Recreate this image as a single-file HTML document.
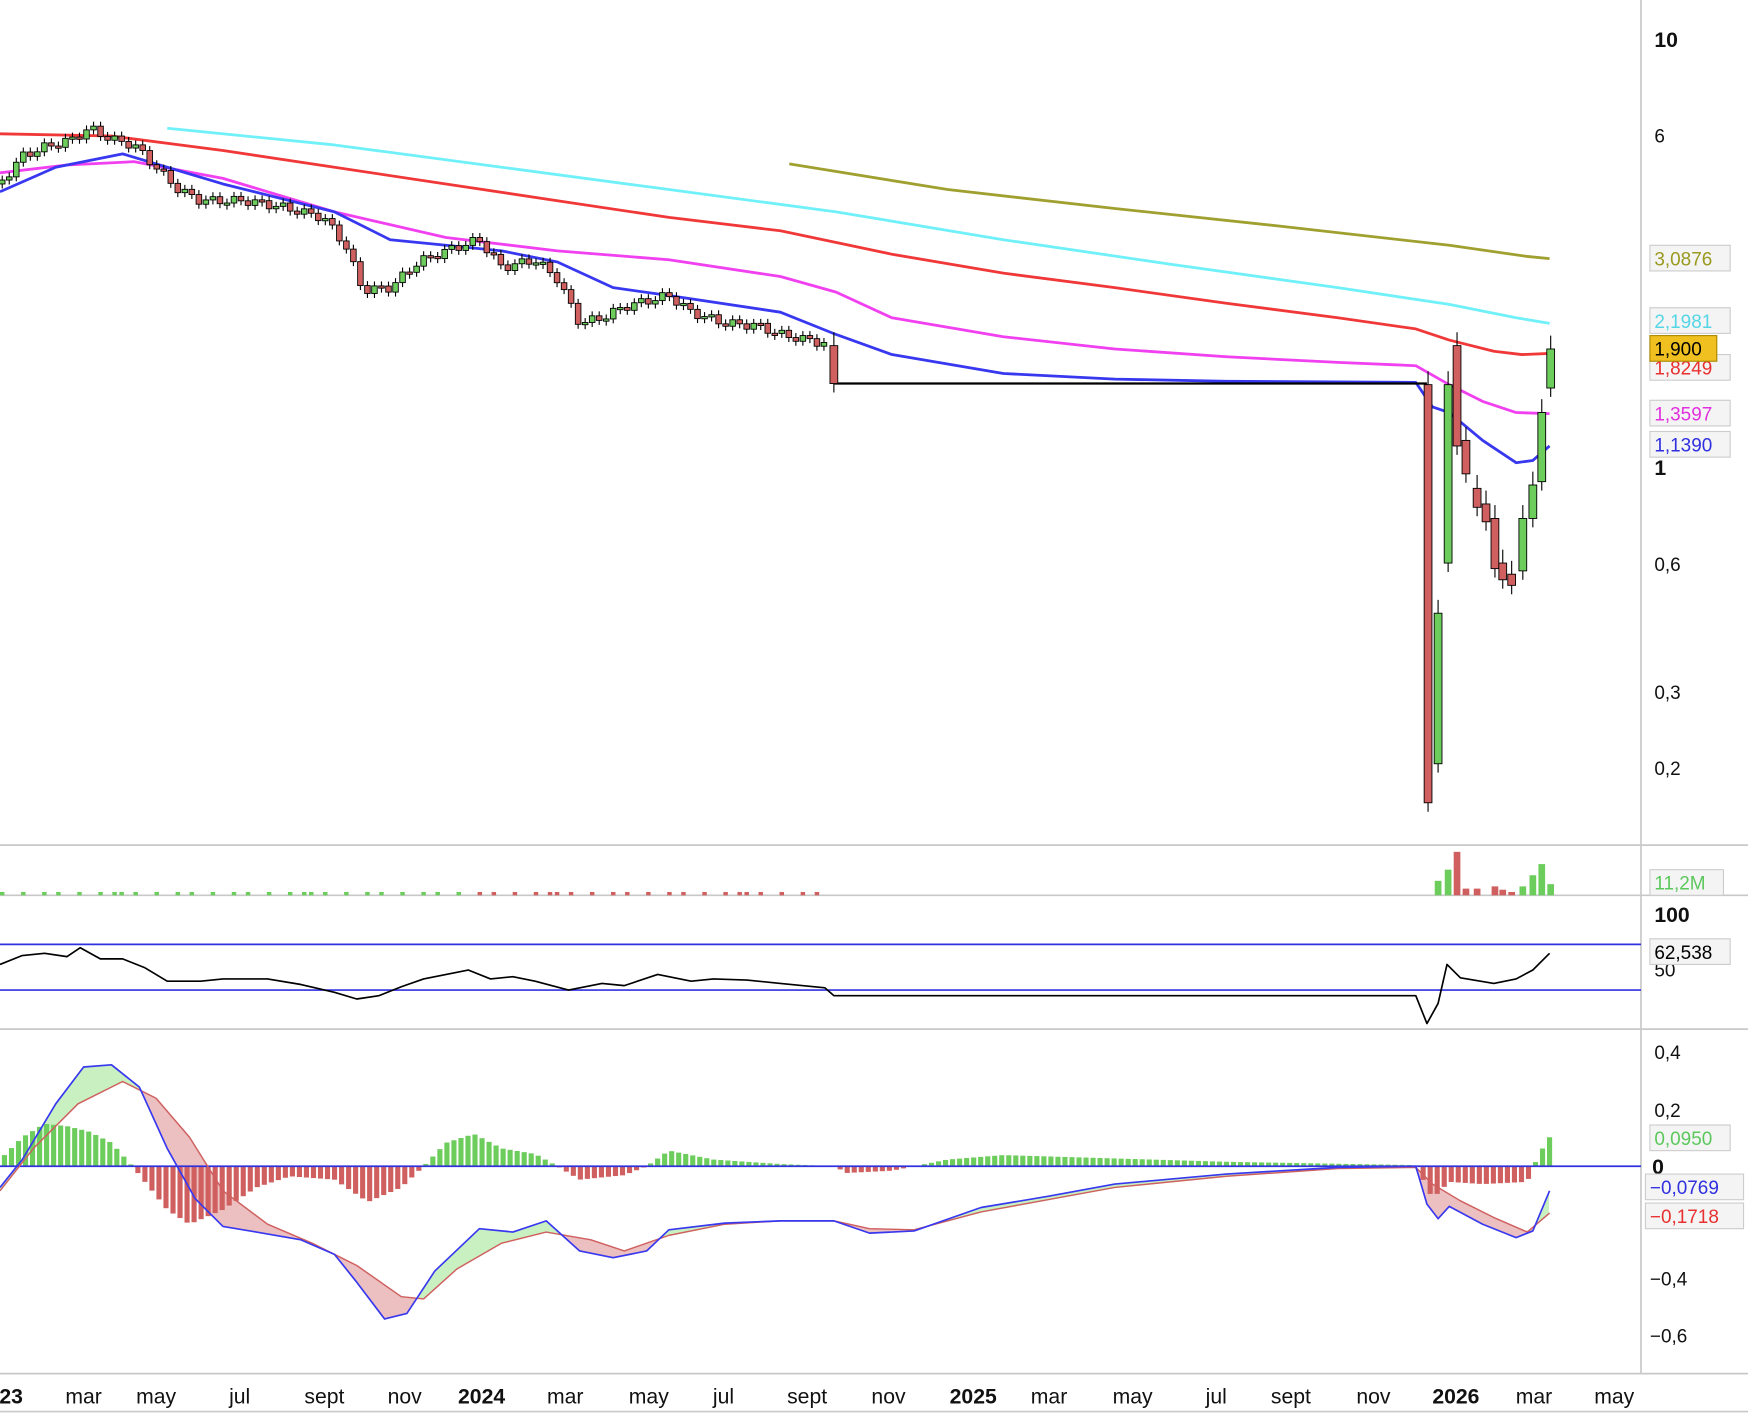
<!DOCTYPE html>
<html><head><meta charset="utf-8"><style>
html,body{margin:0;padding:0;background:#fff;width:1748px;height:1416px;overflow:hidden}
svg{display:block;font-family:"Liberation Sans",sans-serif}
</style></head><body>
<svg id="s" width="1748" height="1416" viewBox="0 0 1568 1270" preserveAspectRatio="none">
<rect width="1568" height="1270" fill="#fff"/>
<g stroke="#c8c8c8" stroke-width="1.5">
<line x1="1472" y1="0" x2="1472" y2="1232"/>
<line x1="0" y1="758" x2="1568" y2="758"/>
<line x1="0" y1="803" x2="1568" y2="803"/>
<line x1="0" y1="923" x2="1568" y2="923"/>
<line x1="0" y1="1232" x2="1568" y2="1232"/>
<line x1="0" y1="1266" x2="1568" y2="1266"/>
</g>
<g id="g"></g>
<g font-size="19" font-weight="bold" fill="#111">
<text x="1484" y="42">10</text><text x="1484" y="426">1</text><text x="1484" y="827">100</text><text x="1482" y="1053">0</text>
</g>
<g font-size="17" fill="#111">
<text x="1484" y="128">6</text><text x="1484" y="512">0,6</text><text x="1484" y="627">0,3</text><text x="1484" y="695">0,2</text>
<text x="1484" y="950">0,4</text><text x="1484" y="1002">0,2</text><text x="1480" y="1153">−0,4</text><text x="1480" y="1204">−0,6</text>
<text x="1484" y="876">50</text>
</g>
<g font-size="17">
<rect x="1480" y="220" width="72" height="23" fill="#f4f4f4" stroke="#ccc"/><text x="1484" y="238" fill="#9a9a20">3,0876</text>
<rect x="1480" y="276" width="72" height="23" fill="#f4f4f4" stroke="#ccc"/><text x="1484" y="294" fill="#55d6e6">2,1981</text>
<rect x="1480" y="318" width="72" height="23" fill="#f4f4f4" stroke="#ccc"/><text x="1484" y="336" fill="#e83030">1,8249</text>
<rect x="1480" y="301" width="60" height="23" fill="#f0c020" stroke="#aa8800"/><text x="1484" y="319" fill="#000">1,900</text>
<rect x="1480" y="359" width="72" height="23" fill="#f4f4f4" stroke="#ccc"/><text x="1484" y="377" fill="#e030e0">1,3597</text>
<rect x="1480" y="387" width="72" height="23" fill="#f4f4f4" stroke="#ccc"/><text x="1484" y="405" fill="#3030e0">1,1390</text>
<rect x="1480" y="780" width="66" height="23" fill="#f4f4f4" stroke="#ccc"/><text x="1484" y="798" fill="#5cc85c">11,2M</text>
<rect x="1480" y="842" width="72" height="23" fill="#f4f4f4" stroke="#ccc"/><text x="1484" y="860" fill="#000">62,538</text>
<rect x="1480" y="1009" width="72" height="23" fill="#f4f4f4" stroke="#ccc"/><text x="1484" y="1027" fill="#5cc85c">0,0950</text>
<rect x="1476" y="1053" width="88" height="23" fill="#f4f4f4" stroke="#ccc"/><text x="1480" y="1071" fill="#3030e0">−0,0769</text>
<rect x="1476" y="1079" width="88" height="23" fill="#f4f4f4" stroke="#ccc"/><text x="1480" y="1097" fill="#e83030">−0,1718</text>
</g>
<g font-size="19" fill="#111" text-anchor="middle">
<text x="10" y="1259" font-weight="bold">23</text><text x="75" y="1259">mar</text><text x="140" y="1259">may</text><text x="215" y="1259">jul</text><text x="291" y="1259">sept</text><text x="363" y="1259">nov</text><text x="432" y="1259" font-weight="bold">2024</text><text x="507" y="1259">mar</text><text x="582" y="1259">may</text><text x="649" y="1259">jul</text><text x="724" y="1259">sept</text><text x="797" y="1259">nov</text><text x="873" y="1259" font-weight="bold">2025</text><text x="941" y="1259">mar</text><text x="1016" y="1259">may</text><text x="1091" y="1259">jul</text><text x="1158" y="1259">sept</text><text x="1232" y="1259">nov</text><text x="1306" y="1259" font-weight="bold">2026</text><text x="1376" y="1259">mar</text><text x="1448" y="1259">may</text>
</g>
</svg>
<script>
var g=document.getElementById('g'),h='';
function pl(p,c,w){h+='<polyline fill="none" stroke="'+c+'" stroke-width="'+(w||2.5)+'" stroke-linejoin="round" points="'+p.map(a=>a.join(',')).join(' ')+'"/>';}
function interp(p,x){for(var i=0;i<p.length-1;i++){if(x>=p[i][0]&&x<=p[i+1][0]){var t=(x-p[i][0])/(p[i+1][0]-p[i][0]);return p[i][1]+t*(p[i+1][1]-p[i][1]);}}return p[p.length-1][1];}
pl([[708,147],[850,170],[1000,187],[1150,203],[1300,220],[1370,230],[1390,232]],'#a0a030');
pl([[150,115],[300,130],[450,150],[600,170],[750,190],[900,215],[1050,237],[1200,258],[1300,273],[1360,285],[1390,290]],'#70f0f8');
pl([[0,120],[100,122],[200,135],[300,150],[400,165],[500,180],[600,195],[700,207],[800,228],[900,245],[1000,258],[1100,272],[1200,285],[1270,295],[1300,305],[1340,315],[1365,318],[1390,317]],'#f03838');
pl([[0,155],[60,148],[120,145],[200,160],[300,190],[400,213],[500,225],[600,233],[700,248],[750,262],[800,285],[900,302],[1000,313],[1100,320],[1200,325],[1270,328],[1300,345],[1330,360],[1360,370],[1390,371]],'#f040f0');
pl([[0,172],[50,150],[110,138],[150,150],[200,165],[300,190],[350,215],[400,220],[450,225],[500,235],[550,258],[600,265],[700,280],[750,300],[800,318],[900,335],[1000,340],[1100,342],[1270,343],[1285,365],[1300,370],[1330,395],[1360,415],[1375,413],[1390,400]],'#3838f0');
pl([[748,344],[1280,344]],'#000',2);
var cp=[[0,165],[20,140],[40,132],[65,125],[80,115],[100,125],[120,130],[140,150],[160,170],[180,180],[220,180],[250,185],[290,195],[310,220],[325,260],[350,258],[375,235],[400,225],[430,215],[450,240],[480,233],[500,250],[520,290],[540,285],[560,275],[580,270],[600,265],[620,280],[650,290],[680,292],[700,300],[740,308]];
var prev=165;
for(var x=2;x<742;x+=6.3){var y=interp(cp,x),o=prev,c=y+(Math.sin(x*1.7)*4);var t=Math.min(o,c),b=Math.max(o,c);if(b-t<2)b=t+2;var col=c<o?'#6ccc5c':'#d06060';
h+='<line x1="'+x+'" y1="'+(t-4)+'" x2="'+x+'" y2="'+(b+4)+'" stroke="#000" stroke-width="1"/><rect x="'+(x-2.5)+'" y="'+t+'" width="5" height="'+(b-t)+'" fill="'+col+'" stroke="#000" stroke-width="0.8"/>';prev=c;}
var big=[[748,310,344,0],[1281,345,720,0],[1290,550,685,1],[1299,345,505,1],[1307,310,400,0],[1315,395,425,0],[1325,438,455,0],[1333,452,468,0],[1341,465,510,0],[1348,505,520,0],[1356,515,525,0],[1366,465,512,1],[1375,435,465,1],[1383,370,432,1],[1391,313,348,1]];
big.forEach(b=>{h+='<line x1="'+b[0]+'" y1="'+(b[1]-12)+'" x2="'+b[0]+'" y2="'+(b[2]+8)+'" stroke="#000" stroke-width="1"/><rect x="'+(b[0]-3.5)+'" y="'+b[1]+'" width="7" height="'+(b[2]-b[1])+'" fill="'+(b[3]?'#6ccc5c':'#d06060')+'" stroke="#000" stroke-width="0.8"/>';});
for(var x=2;x<742;x+=6.3){if(Math.sin(x*0.37)>0.3)h+='<rect x="'+(x-2)+'" y="800" width="4" height="3" fill="'+(Math.sin(x)>0?'#6ccc5c':'#d06060')+'"/>';}
[[1290,790,1],[1299,780,1],[1307,764,0],[1315,797,0],[1325,797,0],[1341,795,0],[1348,798,0],[1356,800,0],[1366,795,1],[1375,785,1],[1383,775,1],[1391,793,1]].forEach(v=>{h+='<rect x="'+(v[0]-3)+'" y="'+v[1]+'" width="6" height="'+(803-v[1])+'" fill="'+(v[2]?'#6ccc5c':'#d06060')+'"/>';});
h+='<line x1="0" y1="847" x2="1472" y2="847" stroke="#3030e0" stroke-width="1.5"/><line x1="0" y1="888" x2="1472" y2="888" stroke="#3030e0" stroke-width="1.5"/>';
pl([[0,865],[20,857],[40,855],[60,858],[72,850],[90,860],[110,860],[130,868],[150,880],[180,880],[200,878],[240,878],[270,883],[300,890],[320,896],[340,893],[360,885],[380,878],[420,870],[440,878],[460,876],[480,880],[510,888],[540,882],[560,884],[590,874],[620,880],[640,878],[670,879],[700,882],[740,886],[748,893],[1270,893],[1280,918],[1290,900],[1298,865],[1310,877],[1340,882],[1360,878],[1375,870],[1390,855]],'#000',1.5);
var hb=[[0,1040],[20,1020],[40,1008],[60,1010],[80,1015],[100,1025],[118,1045],[130,1060],[150,1085],[170,1098],[200,1085],[230,1065],[260,1055],[300,1058],[330,1078],[360,1065],[380,1046],[400,1025],[425,1017],[450,1030],[480,1035],[500,1046],[520,1058],[560,1054],[580,1046],[600,1032],[640,1040],[700,1044],[748,1046],[760,1052],[800,1050],[820,1046],[850,1040],[900,1036],[1000,1039],[1100,1042],[1270,1045],[1285,1075],[1300,1060],[1330,1062],[1370,1060],[1380,1036],[1390,1020]];
var mb=[[0,1065],[20,1040],[50,990],[75,957],[100,955],[125,975],[150,1030],[175,1075],[200,1100],[230,1105],[270,1112],[300,1125],[320,1150],[345,1183],[365,1178],[390,1140],[430,1102],[460,1105],[490,1095],[520,1122],[550,1128],[580,1122],[600,1103],[650,1097],[700,1095],[748,1095],[780,1106],[820,1104],[880,1083],[940,1073],[1000,1062],[1100,1053],[1200,1047],[1270,1046],[1280,1080],[1290,1093],[1300,1082],[1330,1098],[1360,1110],[1375,1104],[1390,1068]];
var sb=[[0,1068],[30,1030],[70,990],[110,970],[140,985],[170,1020],[200,1068],[240,1098],[280,1115],[320,1135],[360,1163],[380,1165],[410,1138],[450,1115],[490,1105],[530,1112],[560,1122],[600,1108],[650,1098],[700,1095],[748,1095],[780,1102],[820,1103],[880,1087],[940,1076],[1000,1065],[1100,1055],[1200,1048],[1270,1047],[1285,1062],[1310,1077],[1340,1092],[1370,1105],[1390,1088]];
var xs=[];for(var x=0;x<=1390;x+=3)xs.push(x);
for(var i=0;i<xs.length-1;i++){var x0=xs[i],x1=xs[i+1],m0=interp(mb,x0),m1=interp(mb,x1),s0=interp(sb,x0),s1=interp(sb,x1);var fc=((m0+m1)<(s0+s1)?'#c8f0c0':'#ecc0c0');h+='<polygon points="'+x0+','+m0+' '+x1+','+m1+' '+x1+','+s1+' '+x0+','+s0+'" fill="'+fc+'" stroke="'+fc+'" stroke-width="1"/>';}
for(var x=4;x<1392;x+=6.3){var y=interp(hb,x);var t=Math.min(y,1046),b=Math.max(y,1046);h+='<rect x="'+(x-2.3)+'" y="'+t+'" width="4.6" height="'+(b-t)+'" fill="'+(y<1046?'#6ccc5c':'#d06060')+'"/>';}
h+='<line x1="0" y1="1046" x2="1472" y2="1046" stroke="#3030e0" stroke-width="1.5"/>';
pl(sb,'#d06060',1.3);pl(mb,'#3838f0',1.5);
g.innerHTML=h;
</script>
</body></html>
